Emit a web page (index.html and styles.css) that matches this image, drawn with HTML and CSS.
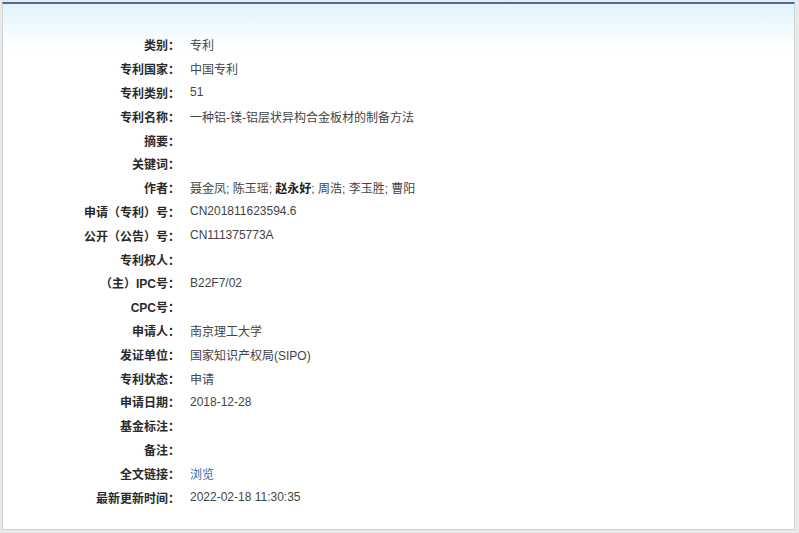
FILE: index.html
```html
<!DOCTYPE html>
<html lang="zh-CN">
<head>
  <meta charset="UTF-8">
  <title>专利详情</title>
  <link rel="stylesheet" href="styles.css">
</head>
<body>

<div class="panel">
  <div class="info">
    <div class="label">类别：</div><div class="value">专利</div>
    <div class="label">专利国家：</div><div class="value">中国专利</div>
    <div class="label">专利类别：</div><div class="value">51</div>
    <div class="label">专利名称：</div><div class="value">一种铝-镁-铝层状异构合金板材的制备方法</div>
    <div class="label">摘要：</div><div class="value"></div>
    <div class="label">关键词：</div><div class="value"></div>
    <div class="label">作者：</div><div class="value">聂金凤; 陈玉瑶; <b>赵永好</b>; 周浩; 李玉胜; 曹阳</div>
    <div class="label">申请（专利）号：</div><div class="value">CN201811623594.6</div>
    <div class="label">公开（公告）号：</div><div class="value">CN111375773A</div>
    <div class="label">专利权人：</div><div class="value"></div>
    <div class="label">（主）IPC号：</div><div class="value">B22F7/02</div>
    <div class="label">CPC号：</div><div class="value"></div>
    <div class="label">申请人：</div><div class="value">南京理工大学</div>
    <div class="label">发证单位：</div><div class="value">国家知识产权局(SIPO)</div>
    <div class="label">专利状态：</div><div class="value">申请</div>
    <div class="label">申请日期：</div><div class="value">2018-12-28</div>
    <div class="label">基金标注：</div><div class="value"></div>
    <div class="label">备注：</div><div class="value"></div>
    <div class="label">全文链接：</div><div class="value"><a href="#">浏览</a></div>
    <div class="label">最新更新时间：</div><div class="value">2022-02-18 11:30:35</div>
  </div>
</div>

</body>
</html>
```

FILE: styles.css
```css
body {
  margin: 0;
  background: #e9e9e9;
  font-family: 'Liberation Sans', 'Noto Sans CJK SC', sans-serif;
  font-size: 12px;
  color: #333;
}

.panel {
  margin: 2px 4px 3px 2px;
  border: 1px solid #d2d2d2;
  border-top: 2px solid #4d6b93;
  background: linear-gradient(#e2f3fd, #f5fbfe 30px, #fff 45px);
  height: 528px;
  box-sizing: border-box;
  padding-top: 29px;
}

.info {
  display: grid;
  grid-template-columns: 177px 1fr;
  column-gap: 10px;
  grid-auto-rows: 23.8px;
  align-items: center;
}

.label {
  text-align: right;
  font-weight: bold;
  color: #2a2a2a;
}

.value {
  color: #444;
}

.value b {
  color: #222;
}

.value a {
  color: #2d6aa0;
  text-decoration: none;
}
```
